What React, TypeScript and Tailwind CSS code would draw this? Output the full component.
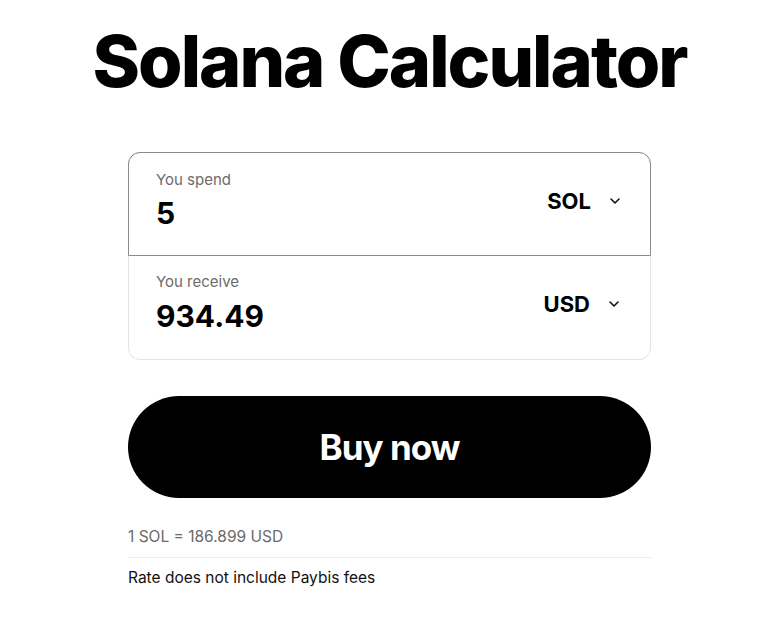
import React from "react";

function Chevron() {
  return (
    <svg width="12" height="8" viewBox="0 0 12 8" fill="none" className="ml-[18px]">
      <path d="M2 2l4 4 4-4" stroke="#111" strokeWidth="1.6" strokeLinecap="round" strokeLinejoin="round" />
    </svg>
  );
}

export default function App() {
  return (
    <div className="min-h-[642px] bg-white pl-[11px]" style={{ fontFamily: "Inter, 'Noto Sans', sans-serif" }}>
      <div className="mx-auto w-[523px] flex flex-col items-center">
        <h1 className="mt-[25px] text-[72px] leading-none font-extrabold tracking-[-2px] text-black whitespace-nowrap">
          Solana Calculator
        </h1>
        <div className="mt-[55px] w-full rounded-[12px] border border-[#e3e3e3]">
          <div className="h-[104px] -m-px rounded-t-[12px] border border-[#8a8a8a] flex items-center justify-between pl-[27px] pr-[29px]">
            <div className="flex flex-col">
              <span className="text-[15px] leading-none text-[#6b6b6b] mt-[-9px]">You spend</span>
              <span className="text-[30px] leading-none font-bold text-black mt-[11px]">5</span>
            </div>
            <div className="flex items-center mt-[-6px]">
              <span className="text-[22px] font-bold text-black">SOL</span>
              <Chevron />
            </div>
          </div>
          <div className="h-[104px] flex items-center justify-between pl-[27px] pr-[30px]">
            <div className="flex flex-col">
              <span className="text-[15px] leading-none text-[#6b6b6b] mt-[-9px]">You receive</span>
              <span className="text-[30px] leading-none font-bold text-black mt-[12px]">934.49</span>
            </div>
            <div className="flex items-center mt-[-6px]">
              <span className="text-[22px] font-bold text-black">USD</span>
              <Chevron />
            </div>
          </div>
        </div>
        <button className="mt-[36px] w-full h-[102px] rounded-full bg-black text-white text-[35px] font-bold tracking-[-1px]">
          Buy now
        </button>
        <div className="w-full mt-[29px] text-[15.5px] text-[#6b6b6b] leading-[20px]">1 SOL = 186.899 USD</div>
        <div className="w-full mt-[10px] border-t border-[#ececec]" />
        <div className="w-full mt-[10px] text-[15.5px] text-[#111] leading-[20px]">Rate does not include Paybis fees</div>
      </div>
    </div>
  );
}
